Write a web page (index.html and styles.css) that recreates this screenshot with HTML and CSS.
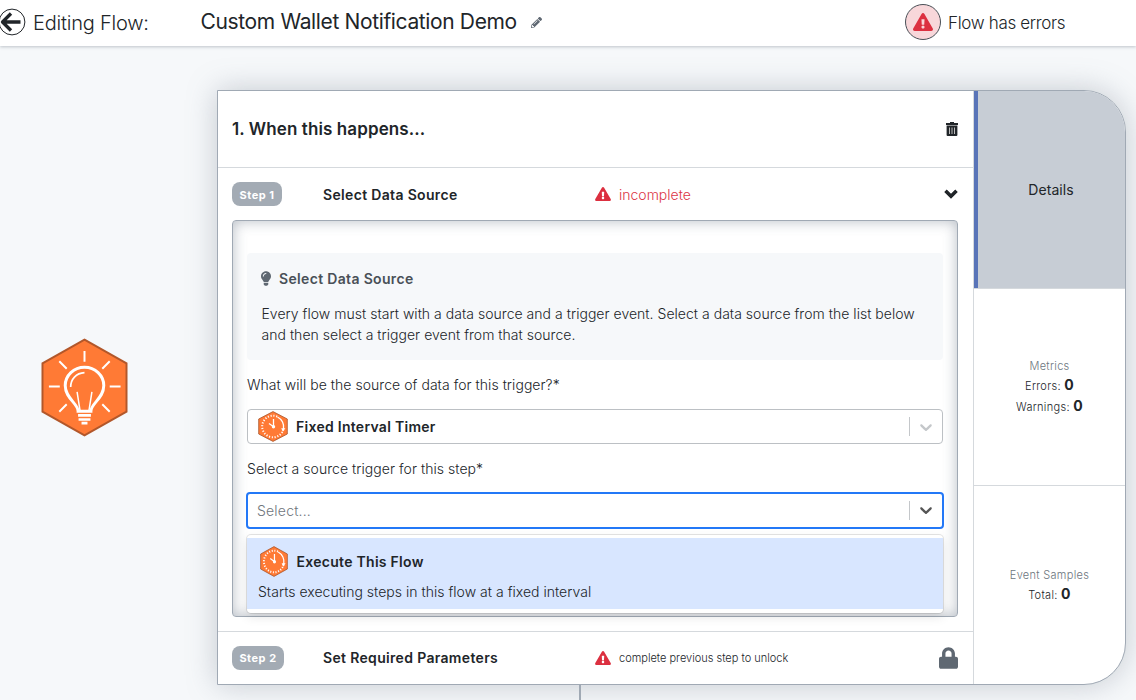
FILE: index.html
```html
<!DOCTYPE html>
<html lang="en">
<head>
<meta charset="utf-8">
<title>Editing Flow</title>
<link rel="stylesheet" href="styles.css">
</head>
<body>
<svg class="defs" aria-hidden="true">
  <symbol id="warn" viewBox="0 0 576 512"><path fill="currentColor" d="M569.5 440c18.500 32-4.700 72-41.600 72H48.100c-36.900 0-60-40.100-41.600-72L246.400 24c18.500-32 64.700-32 83.200 0l239.900 416zM288 354c-25.400 0-46 20.600-46 46s20.600 46 46 46 46-20.600 46-46-20.600-46-46-46zm-43.700-165.300l7.400 136c.4 6.400 5.600 11.300 12 11.300h48.500c6.400 0 11.600-5 12-11.300l7.400-136c.4-6.900-5.100-12.700-12-12.700h-63.400c-6.900 0-12.300 5.800-11.900 12.700z"/></symbol>
  <symbol id="chev" viewBox="0 0 20 20"><path fill="currentColor" d="M4.516 7.548c.436-.446 1.043-.481 1.576 0L10 11.295l3.908-3.747c.533-.481 1.141-.446 1.574 0 .436.445.408 1.197 0 1.615-.406.418-4.695 4.502-4.695 4.502a1.095 1.095 0 0 1-1.574 0S4.924 9.581 4.516 9.163c-.409-.418-.436-1.170 0-1.615z"/></symbol>
  <symbol id="timer" viewBox="0 0 30 31" preserveAspectRatio="none">
    <path d="M15 .6 29.300 8v15L15 30.400.7 23V8z" fill="#ff7a35" stroke="#a8562c" stroke-width=".8"/>
    <circle cx="15" cy="15.500" r="10.800" fill="none" stroke="#fff" stroke-width="2" stroke-dasharray="1.100 1.730"/>
    <path d="M20 6a11 11 0 0 1 5.500 12.500" fill="none" stroke="#ff7a35" stroke-width="3.500"/>
    <path d="M19.500 6a11 11 0 0 1 6 12" fill="none" stroke="#fff" stroke-width="1.300"/>
    <path d="M23.200 17.300h4.200l-2.600 3.500z" fill="#fff"/>
    <path d="M15.500 8v7.500M11 12.500l4.300 3" fill="none" stroke="#fff" stroke-width="1.300"/>
    <circle cx="15.500" cy="15.800" r="1.700" fill="#fff"/>
  </symbol>
</svg>

<header class="topbar">
  <svg class="back" viewBox="0 0 28 28"><circle cx="14" cy="14" r="12.900" fill="#fff" stroke="#212529" stroke-width="1"/><path d="M22.500 14H4.500M13 5.500 4.500 14l8.500 8.500" fill="none" stroke="#212529" stroke-width="3.300" stroke-linejoin="round"/></svg>
  <span class="editing">Editing Flow:</span>
  <span class="flow-name">Custom Wallet Notification Demo</span>
  <svg class="pencil" viewBox="0 0 512 512"><path fill="#5f6872" d="M497.900 142.100l-46.100 46.100c-4.700 4.700-12.300 4.700-17 0l-111-111c-4.700-4.700-4.700-12.300 0-17l46.100-46.100c18.700-18.700 49.100-18.700 67.900 0l60.100 60.100c18.800 18.700 18.800 49.100 0 67.900zM284.200 99.800L21.600 362.400.4 483.900c-2.900 16.400 11.400 30.600 27.800 27.800l121.500-21.300 262.600-262.600c4.700-4.700 4.700-12.300 0-17l-111-111c-4.800-4.700-12.400-4.700-17.100 0zM124.100 339.900c-5.500-5.500-5.500-14.300 0-19.800l154-154c5.500-5.500 14.300-5.500 19.800 0s5.500 14.300 0 19.800l-154 154c-5.500 5.500-14.300 5.500-19.800 0zM88 424h48v36.300l-64.500 11.300-31.100-31.100L51.700 376H88v48z"/></svg>
  <div class="status"><span class="status-badge"><svg class="status-icon"><use href="#warn"/></svg></span><span class="status-text">Flow has errors</span></div>
</header>

<main class="canvas">
  <svg class="trigger" viewBox="0 0 88 100">
    <path d="M44 1.500 86.500 25.500v49L44 98.500 1.500 74.500v-49z" fill="#ff7a35" stroke="#b2572a" stroke-width="2"/>
    <g fill="none" stroke="#fff" stroke-linecap="butt">
      <path stroke-width="2" d="M44 13v11M18.500 23.500l7.500 7.500M69.500 23.500 62 31M8 49h11M69.500 49h11M18.500 74.500l7.500-7.500M69.500 74.500 62 67"/>
      <path stroke-width="3" d="M37.500 74c0-8-13-13-13-26a19.500 18.500 0 0 1 39 0c0 13-13 18-13 26z"/>
      <path stroke-width="1.700" d="M30 49.500c0-8 5.500-14 14-14.500"/>
      <path stroke-width="1.500" d="M36.500 54.500l3 19M51.500 54.500l-3 19"/>
      <path stroke-width="2.600" d="M37.500 78.200h13M38 82.300h12M41 86h6"/>
    </g>
  </svg>

  <section class="card">
    <div class="main">
      <div class="card-head"><span class="card-title">1. When this happens...</span>
        <svg class="trash" viewBox="0 0 12 14"><path fill="#212529" d="M4 0h4v1h4v2H0V1h4zM.6 3.600h10.800V13q0 1-1 1H1.600q-1 0-1-1z"/><path d="M3.500 5.500v6.500M6 5.500v6.500M8.500 5.500v6.500" stroke="#bbb" stroke-width="1"/></svg>
      </div>
      <div class="step">
        <div class="step-row">
          <span class="pill">Step 1</span><span class="step-name name-1">Select Data Source</span>
          <svg class="warn"><use href="#warn"/></svg><span class="incomplete">incomplete</span>
          <svg class="fold" viewBox="0 0 14 10"><path d="M1.500 1.800 7 7.300 12.500 1.800" fill="none" stroke="#212529" stroke-width="3.600"/></svg>
        </div>
        <div class="panel">
          <div class="hint">
            <div class="hint-head"><svg class="bulb" viewBox="0 0 352 512"><path fill="#5f6872" d="M96.060 454.350c.010 6.290 1.870 12.450 5.360 17.690l17.090 25.690a31.990 31.990 0 0 0 26.640 14.280h61.710a31.990 31.990 0 0 0 26.640-14.280l17.090-25.690a31.989 31.989 0 0 0 5.360-17.690l.04-38.350H96.010l.05 38.350zM0 176c0 44.370 16.450 84.850 43.560 115.780 16.520 18.850 42.360 58.230 52.210 91.450.04.26.07.52.11.78h160.240c.04-.26.07-.51.11-.78 9.850-33.220 35.690-72.600 52.210-91.450C335.550 260.850 352 220.370 352 176 352 78.610 272.910-.3 175.450 0 73.440.31 0 82.970 0 176zm176-80c-44.110 0-80 35.890-80 80 0 8.840-7.160 16-16 16s-16-7.160-16-16c0-61.760 50.240-112 112-112 8.840 0 16 7.160 16 16s-7.160 16-16 16z"/></svg><span>Select Data Source</span></div>
            <p class="hint-text">Every flow must start with a data source and a trigger event. Select a data source from the list below<br>and then select a trigger event from that source.</p>
          </div>
          <label class="label">What will be the source of data for this trigger?*</label>
          <div class="select">
            <svg class="timer"><use href="#timer"/></svg><span class="value">Fixed Interval Timer</span>
            <span class="sep"></span><svg class="chev"><use href="#chev"/></svg>
          </div>
          <label class="label label-b">Select a source trigger for this step*</label>
          <div class="select focused">
            <span class="placeholder">Select...</span>
            <span class="sep"></span><svg class="chev"><use href="#chev"/></svg>
          </div>
          <div class="menu">
            <div class="option">
              <div class="option-head"><svg class="timer"><use href="#timer"/></svg><span>Execute This Flow</span></div>
              <div class="option-text">Starts executing steps in this flow at a fixed interval</div>
            </div>
          </div>
        </div>
      </div>
      <div class="step-row step-two">
        <span class="pill pill-2">Step 2</span><span class="step-name name-2">Set Required Parameters</span>
        <svg class="warn"><use href="#warn"/></svg><span class="locked">complete previous step to unlock</span>
        <svg class="lock" viewBox="0 0 448 512"><path fill="#5f6872" d="M400 224h-24v-72C376 68.200 307.800 0 224 0S72 68.200 72 152v72H48c-26.500 0-48 21.500-48 48v192c0 26.500 21.500 48 48 48h352c26.500 0 48-21.500 48-48V272c0-26.500-21.500-48-48-48zm-104 0H152v-72c0-39.700 32.300-72 72-72s72 32.300 72 72v72z"/></svg>
      </div>
    </div>
    <aside class="side">
      <div class="tab tab-active"><span class="details">Details</span></div>
      <div class="tab"><span class="muted">Metrics</span><span class="stat">Errors: <b>0</b></span><span class="stat stat-b">Warnings: <b>0</b></span></div>
      <div class="tab tab-last"><span class="muted">Event Samples</span><span class="stat">Total: <b>0</b></span></div>
    </aside>
  </section>
</main>
<div class="connector"></div>
</body>
</html>
```
FILE: styles.css
```css
* { box-sizing: border-box; }
body {
  margin: 0; width: 1136px; height: 700px; overflow: hidden;
  display: flex; flex-direction: column;
  background: #f6f8fa; color: #212529;
  font: 300 14px/21px Inter, sans-serif;
}
svg { display: block; flex: none; }
span, label { white-space: nowrap; }
.defs { position: absolute; width: 0; height: 0; }

.topbar {
  flex: none; height: 46px; display: flex; align-items: center; padding-bottom: 2px;
  background: #fff; box-shadow: 0 1px 3px rgba(90,105,120,.36);
}
.back { width: 28px; height: 28px; margin-left: -2px; }
.editing { width: 162px; padding: 2px 0 0 7px; font-size: 20px; letter-spacing: -.22px; }
.flow-name { margin-left: 12.500px; width: 317px; font-size: 21px; font-weight: 400; letter-spacing: -.36px; padding-bottom: 1px; }
.pencil { width: 11px; height: 11px; margin-left: 13.500px; }
.status { margin-left: auto; width: 231px; display: flex; align-items: center; gap: 7px; }
.status-badge {
  width: 36px; height: 36px; border: 1px solid #495057; border-radius: 50%;
  background: #f8d7da; color: #dc3040; display: grid; place-items: center;
}
.status-icon { width: 20px; height: 18px; }
.status-text { padding-top: 3px; font-size: 17px; letter-spacing: -.33px; }

.canvas { flex: none; display: flex; padding-top: 44px; height: 639px; }
.trigger { width: 87px; height: 99px; margin: 248px 89px 0 41px; }
.card {
  width: 909px; height: 595px; display: flex;
  background: #fff; border: 1px solid #a0a9b4; border-radius: 0 42px 42px 0; overflow: hidden;
  box-shadow: 0 0 30px rgba(108,120,135,.36);
}
.main { width: 755px; }
.card-head {
  height: 77px; padding: 0 15px 0 14px; display: flex; align-items: center; justify-content: space-between;
  border-bottom: 1px solid #d5d9dd;
}
.card-title { font-size: 17px; font-weight: 600; letter-spacing: .1px; }
.trash { width: 12px; height: 14px; }
.step { height: 464px; padding: 0 15px 14px 14px; border-bottom: 1px solid #d5d9dd; }
.step-row { height: 52px; display: flex; align-items: center; }
.step-two { height: 53px; padding: 0 15px 1px 14px; }
.pill {
  width: 50px; height: 24px; border-radius: 8px; background: #a3abb4; color: #fff;
  font-size: 11px; font-weight: 700; line-height: 26px; letter-spacing: .5px; text-align: center;
}
.pill-2 { width: 52px; line-height: 25px; }
.step-name { width: 272px; margin-left: 41px; font-weight: 600; letter-spacing: .33px; }
.name-2 { margin-left: 39px; padding-bottom: 1px; }
.warn { width: 16px; height: 14px; color: #dc3040; }
.incomplete { margin-left: 8px; color: #dc3545; }
.locked { margin-left: 8px; padding-top: 1px; font-size: 11px; }
.fold { width: 14px; height: 10px; margin-left: auto; }
.lock { width: 19px; height: 22px; margin-left: auto; }

.panel {
  width: 726px; height: 397px; padding: 32px 14px 0; border: 1px solid #a0a9b4; border-radius: 4px;
  box-shadow: inset 0 0 14px rgba(80,95,115,.42);
}
.hint { height: 107px; padding: 15px 14px 0; border-radius: 4px; background: #f6f8fa; }
.hint-head { display: flex; align-items: center; gap: 8px; font-weight: 600; letter-spacing: .33px; color: #495057; }
.bulb { width: 10px; height: 15px; }
.hint-text { margin: 14px 0 0 .5px; letter-spacing: .03px; white-space: nowrap; }
.label { display: block; height: 49px; padding-top: 14px; letter-spacing: .045px; }
.label-b { height: 48px; }
.select { height: 35px; display: flex; align-items: center; border: 1px solid #bcc0c4; border-radius: 4px; background: #fff; color: #c4c7ca; }
.timer { width: 30px; height: 31px; }
.select .timer { margin-left: 9.500px; }
.value { margin-left: 8.500px; color: #212529; font-weight: 600; letter-spacing: .28px; }
.focused { height: 37px; margin: 0 -1px; border: 2px solid #2378f7; color: #555; }
.placeholder { margin-left: 9px; color: #70767c; letter-spacing: .2px; }
.sep { width: 1px; height: 19px; margin-left: auto; background: #c4c7ca; }
.chev { width: 20px; height: 20px; margin: 0 6px; }
.focused .chev { margin: 0 6px 1px; }
.menu {
  height: 78px; margin-top: 6px; padding: 3px 0; border-radius: 4px; background: #fff; position: relative;
  box-shadow: 0 0 0 1px rgba(0,0,0,.1), 0 4px 11px rgba(0,0,0,.1);
}
.option { height: 71px; padding: 8px 11px 0; background: #d8e6ff; }
.option-head { display: flex; align-items: center; gap: 9px; padding-left: 1.500px; font-weight: 600; letter-spacing: .28px; }
.option .timer { width: 28px; }
.option-text { margin-top: 4px; letter-spacing: .025px; }

.side { width: 152px; border-left: 1px solid #d5d9dd; text-align: center; font-size: 11px; letter-spacing: .3px; }
.tab { height: 197px; border-bottom: 1px solid #d5d9dd; display: flex; flex-direction: column; align-items: center; justify-content: center; }
.tab-active { height: 198px; background: #c7cdd5; box-shadow: inset 4px 0 #5974b8; padding-left: 3px; }
.tab-last { border-bottom: 0; height: 198px; }
.details { font-size: 14px; font-weight: 400; letter-spacing: .1px; }
.muted { color: #6c757d; line-height: 18px; }
.stat { line-height: 20px; }
.stat b { font-size: 14px; font-weight: 700; }
.connector { width: 2px; height: 15px; margin-left: 579px; background: #a0a9b4; }
```
